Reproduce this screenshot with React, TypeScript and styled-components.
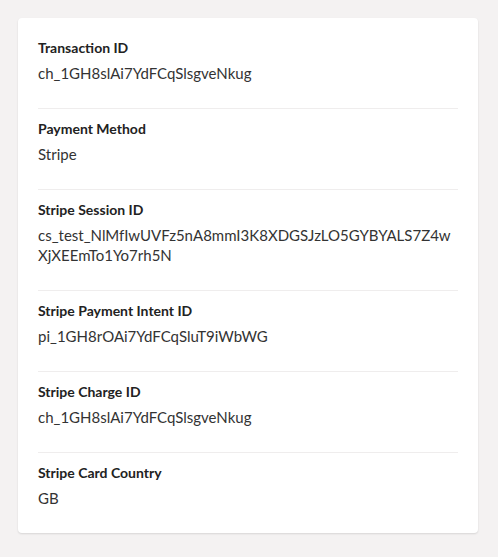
import React from 'react';
import styled, { createGlobalStyle } from 'styled-components';

const GlobalStyle = createGlobalStyle`
  body {
    margin: 0;
    background: #f4f2f2;
    font-family: Lato, "Open Sans", sans-serif;
  }
`;

const Page = styled.div`
  padding: 18px 20px 24px 18px;
`;

const Card = styled.div`
  background: #fff;
  border-radius: 4px;
  box-shadow: 0 1px 2px rgba(0, 0, 0, 0.12);
  padding: 10px 20px 0;
`;

const Field = styled.div`
  padding: 10px 0 25px;
  border-bottom: 1px solid #efeded;

  &:last-child {
    border-bottom: none;
  }
`;

const Label = styled.div`
  color: #222;
  font-size: 14px;
  font-weight: 700;
  line-height: 20px;
  margin-bottom: 5px;
`;

const Value = styled.div`
  color: #333;
  font-size: 15px;
  line-height: 20px;
  word-break: break-all;
`;

const fields = [
  { label: 'Transaction ID', value: 'ch_1GH8slAi7YdFCqSlsgveNkug' },
  { label: 'Payment Method', value: 'Stripe' },
  {
    label: 'Stripe Session ID',
    value: 'cs_test_NlMfIwUVFz5nA8mmI3K8XDGSJzLO5GYBYALS7Z4wXjXEEmTo1Yo7rh5N'
  },
  { label: 'Stripe Payment Intent ID', value: 'pi_1GH8rOAi7YdFCqSluT9iWbWG' },
  { label: 'Stripe Charge ID', value: 'ch_1GH8slAi7YdFCqSlsgveNkug' },
  { label: 'Stripe Card Country', value: 'GB' }
];

export default function App() {
  return (
    <>
      <GlobalStyle />
      <Page>
        <Card>
          {fields.map((f) => (
            <Field key={f.label}>
              <Label>{f.label}</Label>
              <Value>{f.value}</Value>
            </Field>
          ))}
        </Card>
      </Page>
    </>
  );
}
